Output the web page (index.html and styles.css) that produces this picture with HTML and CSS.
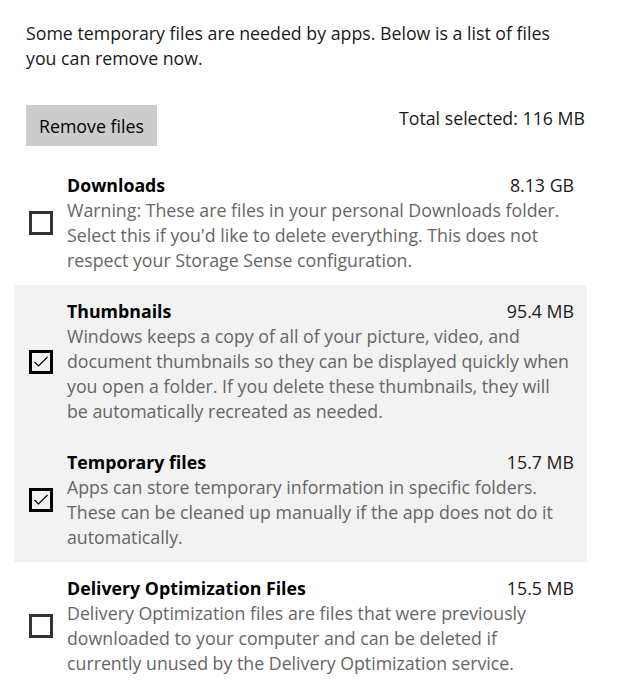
FILE: index.html
```html
<!DOCTYPE html>
<html>
<head>
  <title>Temporary files</title>
  <link rel="stylesheet" href="styles.css">
</head>
<body>
  <p class="intro">Some temporary files are needed by apps. Below is a list of files<br>you can remove now.</p>

  <div class="toolbar">
    <button class="remove-btn">Remove files</button>
    <span class="total">Total selected: 116 MB</span>
  </div>

  <div class="list">
    <div class="item">
      <span class="check"></span>
      <div class="body">
        <div class="head"><span class="title">Downloads</span><span class="size">8.13 GB</span></div>
        <p class="desc">Warning: These are files in your personal Downloads folder.<br>Select this if you'd like to delete everything. This does not<br>respect your Storage Sense configuration.</p>
      </div>
    </div>

    <div class="item selected">
      <span class="check checked">
        <svg width="18" height="18" viewBox="0 0 18 18"><polyline points="2.5,9 6.5,13 15.5,4" fill="none" stroke="#000" stroke-width="1.2"/></svg>
      </span>
      <div class="body">
        <div class="head"><span class="title">Thumbnails</span><span class="size">95.4 MB</span></div>
        <p class="desc">Windows keeps a copy of all of your picture, video, and<br>document thumbnails so they can be displayed quickly when<br>you open a folder. If you delete these thumbnails, they will<br>be automatically recreated as needed.</p>
      </div>
    </div>

    <div class="item selected">
      <span class="check checked">
        <svg width="18" height="18" viewBox="0 0 18 18"><polyline points="2.5,9 6.5,13 15.5,4" fill="none" stroke="#000" stroke-width="1.2"/></svg>
      </span>
      <div class="body">
        <div class="head"><span class="title">Temporary files</span><span class="size">15.7 MB</span></div>
        <p class="desc">Apps can store temporary information in specific folders.<br>These can be cleaned up manually if the app does not do it<br>automatically.</p>
      </div>
    </div>

    <div class="item">
      <span class="check"></span>
      <div class="body">
        <div class="head"><span class="title">Delivery Optimization Files</span><span class="size">15.5 MB</span></div>
        <p class="desc">Delivery Optimization files are files that were previously<br>downloaded to your computer and can be deleted if<br>currently unused by the Delivery Optimization service.</p>
      </div>
    </div>
  </div>
</body>
</html>
```

FILE: styles.css
```css
body {
  margin: 0;
  background-color: #fff;
  font-family: "Open Sans", "Noto Sans", sans-serif;
  font-size: 17.75px;
  line-height: 25px;
  color: #1a1a1a;
}

p {
  margin: 0;
}

.intro {
  margin: 21px 0 0 26px;
  white-space: nowrap;
}

.toolbar {
  display: flex;
  justify-content: space-between;
  align-items: flex-start;
  margin: 34px 32px 0 26px;
}

.remove-btn {
  height: 41px;
  padding: 0 13px;
  font-family: inherit;
  font-size: 17.75px;
  color: #000;
  background-color: #ccc;
  border: none;
}

.total {
  margin-top: 1px;
}

.list {
  width: 573px;
  margin: 13px 0 0 14px;
}

.item {
  display: flex;
  align-items: center;
  gap: 14px;
  padding: 14px 13px 12px 15px;
}

.item.selected {
  background-color: #f2f2f2;
}

.check {
  width: 24px;
  height: 24px;
  box-sizing: border-box;
  border: 3px solid #333;
  display: flex;
  align-items: center;
  justify-content: center;
  flex-shrink: 0;
}

.check.checked {
  border-color: #000;
}

.body {
  flex: 1;
}

.head {
  display: flex;
  justify-content: space-between;
}

.title {
  font-weight: bold;
  color: #000;
}

.size {
  color: #1a1a1a;
}

.desc {
  color: #666;
  white-space: nowrap;
}
```
